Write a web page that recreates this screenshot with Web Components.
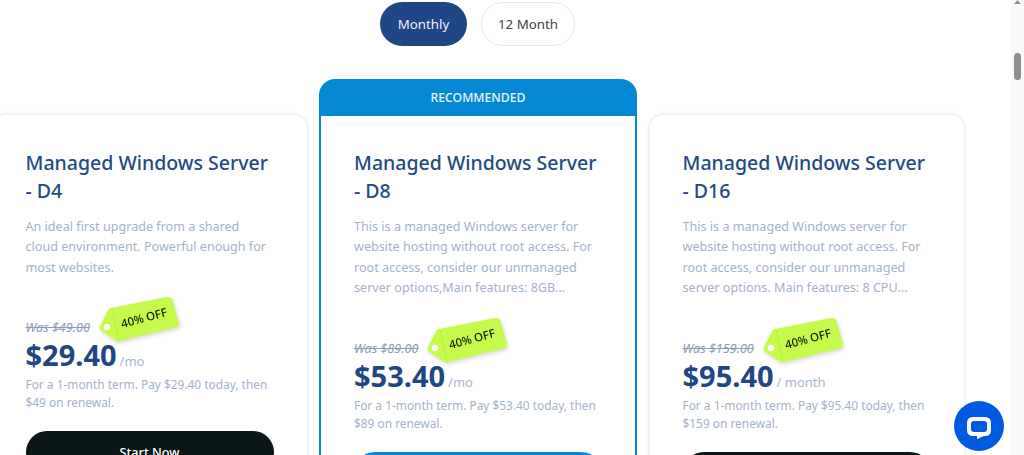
<!DOCTYPE html>
<html lang="en">
<head>
<meta charset="utf-8">
<title>Managed Windows Server</title>
<style>
  html, body { margin: 0; height: 455px; overflow: hidden; background: #fff; }
  body { display: flex; font-family: "Noto Sans", sans-serif; }
  main { flex: 1; min-width: 0; padding-top: 2px; }
</style>
</head>
<body>
<main>
  <plan-toggle></plan-toggle>
  <plan-grid>
    <price-card name="Managed Windows Server - D4" was="Was $49.00" price="$29.40" unit="/mo" cta="Start Now"
      term="For a 1-month term. Pay $29.40 today, then $49 on renewal."
      description="An ideal first upgrade from a shared cloud environment. Powerful enough for most websites."></price-card>
    <price-card featured name="Managed Windows Server - D8" was="Was $89.00" price="$53.40" unit="/mo" cta="Start Now"
      term="For a 1-month term. Pay $53.40 today, then $89 on renewal."
      description="This is a managed Windows server for website hosting without root access. For root access, consider our unmanaged server options,Main features: 8GB..."></price-card>
    <price-card name="Managed Windows Server - D16" was="Was $159.00" price="$95.40" unit="/ month" cta="Start Now"
      term="For a 1-month term. Pay $95.40 today, then $159 on renewal."
      description="This is a managed Windows server for website hosting without root access. For root access, consider our unmanaged server options. Main features: 8 CPU..."></price-card>
  </plan-grid>
</main>
<fake-scrollbar></fake-scrollbar>
<chat-button></chat-button>

<script>
class PlanToggle extends HTMLElement {
  constructor() {
    super();
    this.attachShadow({ mode: "open" });
    this.shadowRoot.innerHTML = /*html*/ `
      <style>
        :host { display: flex; justify-content: center; gap: 14px; width: 975px; margin-left: -10px; }
        button {
          height: 44px; border-radius: 22px; font: 400 13.300px "Noto Sans", sans-serif;
          box-sizing: border-box; padding: 0; cursor: pointer;
        }
        .active { width: 87px; background: #1f4685; border: 0; color: #eef1f8; }
        .idle { width: 94px; background: #fff; border: 1px solid #e4e6ea; color: #3a3f45; }
      </style>
      <button class="active">Monthly</button>
      <button class="idle">12 Month</button>
    `;
  }
}

class PlanGrid extends HTMLElement {
  constructor() {
    super();
    this.attachShadow({ mode: "open" });
    this.shadowRoot.innerHTML = /*html*/ `
      <style>
        :host { display: flex; gap: 10.500px; width: 975px; margin: 33px 0 0 -9.500px; align-items: flex-start; }
      </style>
      <slot></slot>
    `;
  }
}

class DiscountTag extends HTMLElement {
  constructor() {
    super();
    this.attachShadow({ mode: "open" });
    this.shadowRoot.innerHTML = /*html*/ `
      <style>
        :host {
          position: absolute; left: calc(100% + 9px); top: -24px; width: 82px; height: 46px;
          filter: drop-shadow(1px 2px 2px rgba(0,0,0,.16));
        }
        svg { display: block; }
        span {
          position: absolute; left: 15px; top: 14px; width: 60px; text-align: center;
          font: 500 11.500px/16px "Noto Sans", sans-serif; color: #10180c;
          transform: rotate(-15deg); white-space: nowrap;
        }
      </style>
      <svg width="82" height="46" viewBox="0 0 82 46">
        <path fill="#c6fb4b" d="M12 12 L68 1 Q72 0.500 73 3 L80 27 Q81 30 78 31 L21 45 Q18 46 16 44 L1 34 Q0 32 1 30 L9 14 Q10 12.500 12 12 Z"/>
        <path fill="none" stroke="#b9ee42" stroke-width="1" d="M13 12.500 L20 44.500"/>
        <circle cx="8" cy="31" r="3.200" fill="#fff"/>
      </svg>
      <span>40% OFF</span>
    `;
  }
}

class PriceCard extends HTMLElement {
  constructor() {
    super();
    this.attachShadow({ mode: "open" });
  }

  connectedCallback() {
    const get = (name) => this.getAttribute(name) ?? "";
    const featured = this.hasAttribute("featured");
    this.shadowRoot.innerHTML = /*html*/ `
      <style>
        :host { display: block; flex: 0 0 318px; width: 318px; box-sizing: border-box; }
        :host(:not([featured])) { margin-top: 34px; }
        .banner {
          height: 37px; background: #0588d4; border-radius: 16px 16px 0 0; color: #eaf6fd;
          font: 500 12.200px/38px "Noto Sans", sans-serif; text-align: center;
        }
        .card {
          box-sizing: border-box; height: 400px; padding: 34px 32px 0 33px; background: #fff;
          border: 2px solid #f0f2f6; border-radius: 16px;
        }
        :host(:not([featured])) .card { box-shadow: 0 0 4px rgba(40,60,110,.05); }
        :host([featured]) .card { border: 2px solid #0a8ad6; border-top: 0; border-radius: 0; padding-top: 33px; }
        h2 { margin: 0 0 13px; max-width: 246px; font: 500 19.500px/27.500px "Noto Sans", sans-serif; color: #234a85; }
        .desc { margin: 0; font: 400 12.600px/20.400px "Noto Sans", sans-serif; color: #a3b2cb; }
        .pricing { margin-top: 42px; }
        .was-row { position: relative; width: fit-content; }
        .was { font: italic 400 12.600px/16px "Noto Sans", sans-serif; color: #8d9cb8; text-decoration: line-through; }
        .amount { display: flex; align-items: baseline; gap: 3px; }
        b { font: 700 29px/38px "Noto Sans", sans-serif; color: #1f4685; }
        .unit { font: 400 13px/18px "Noto Sans", sans-serif; color: #a7b5cd; }
        .term { margin: 1px 0 0; font: 400 11.900px/18px "Noto Sans", sans-serif; color: #a3b2cb; }
        button {
          display: block; box-sizing: border-box; width: 248px; height: 42px; margin-top: 20px; border: 0;
          border-radius: 21px; background: #0b1716; color: #fff; font: 500 12.600px "Noto Sans", sans-serif;
        }
        :host([featured]) button { background: #0588d4; }
      </style>
      ${featured ? `<div class="banner">RECOMMENDED</div>` : ""}
      <div class="card">
        <h2>${get("name")}</h2>
        <p class="desc">${get("description")}</p>
        <div class="pricing">
          <div class="was-row">
            <div class="was">${get("was")}</div>
            <discount-tag></discount-tag>
          </div>
          <div class="amount"><b>${get("price")}</b><span class="unit">${get("unit")}</span></div>
          <p class="term">${get("term")}</p>
          <button>${get("cta")}</button>
        </div>
      </div>
    `;
  }
}

class FakeScrollbar extends HTMLElement {
  constructor() {
    super();
    this.attachShadow({ mode: "open" });
    this.shadowRoot.innerHTML = /*html*/ `
      <style>
        :host { display: block; flex: 0 0 13px; height: 455px; background: #fafafa; position: relative; }
        svg { display: block; margin: 0 auto; }
        div { width: 7px; height: 27px; margin: 49px auto 0; background: #8f8f8f; border-radius: 4px; }
      </style>
      <svg width="13" height="4" viewBox="0 0 13 4"><path d="M6.500 0 L10 4 H3 Z" fill="#8f8f8f"/></svg>
      <div></div>
    `;
  }
}

class ChatButton extends HTMLElement {
  constructor() {
    super();
    this.attachShadow({ mode: "open" });
    this.shadowRoot.innerHTML = /*html*/ `
      <style>
        :host {
          position: fixed; left: 954px; top: 401px; width: 50px; height: 50px; border-radius: 50%;
          background: #0059e1; display: flex; align-items: center; justify-content: center;
        }
        svg { margin-top: 3px; }
      </style>
      <svg width="24" height="22" viewBox="0 0 24 22">
        <path fill="#fff" fill-rule="evenodd" d="M6 0 H18 Q24 0 24 6 V13 Q24 19 18 19 H17 L10 22 V19 H6 Q0 19 0 13 V6 Q0 0 6 0 Z M7 4 Q4 4 4 7 V12 Q4 15 7 15 H17 Q20 15 20 12 V7 Q20 4 17 4 Z"/>
      </svg>
    `;
  }
}

customElements.define("plan-toggle", PlanToggle);
customElements.define("plan-grid", PlanGrid);
customElements.define("discount-tag", DiscountTag);
customElements.define("price-card", PriceCard);
customElements.define("fake-scrollbar", FakeScrollbar);
customElements.define("chat-button", ChatButton);
</script>
</body>
</html>
